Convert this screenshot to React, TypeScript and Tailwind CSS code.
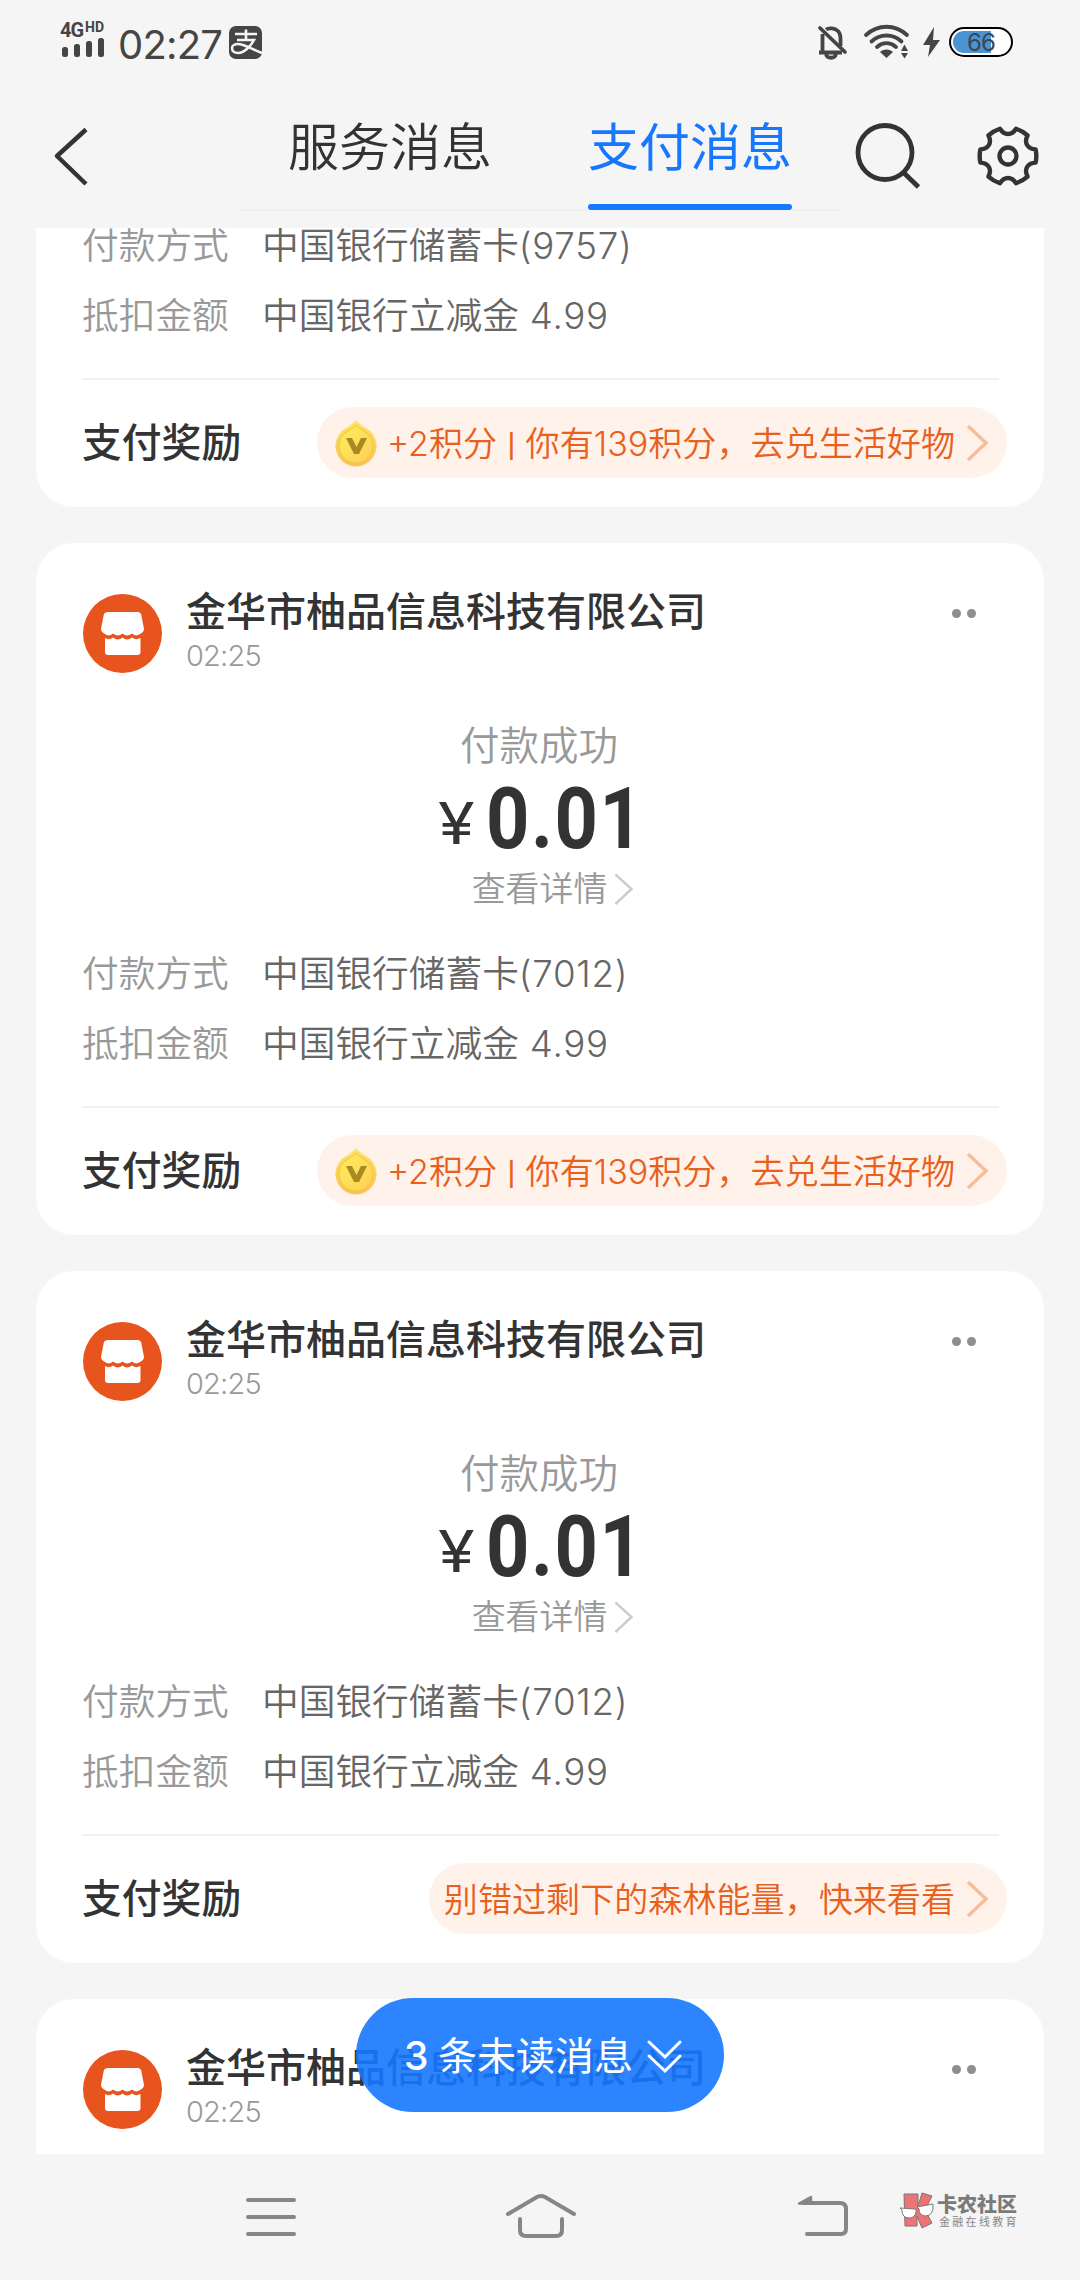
import type { ReactNode } from "react";

const FONT =
  "font-['Inter','Noto_Sans_CJK_SC',sans-serif]";

function gearPath(c: number, outer: number, inner: number) {
  const pt = (deg: number, r: number) => {
    const a = (deg * Math.PI) / 180;
    return `${(c + r * Math.cos(a)).toFixed(2)} ${(c + r * Math.sin(a)).toFixed(2)}`;
  };
  let d = `M${pt(-13.5, outer)}`;
  for (let i = 0; i < 6; i++) {
    const t = i * 60;
    d += `Q${pt(t, outer + 0.6)} ${pt(t + 13.5, outer)}`;
    d += `C${pt(t + 20, inner)} ${pt(t + 40, inner)} ${pt(t + 46.5, outer)}`;
  }
  return d + "Z";
}

const GEAR = gearPath(32, 28.4, 20.6);

function StatusBar() {
  return (
    <div className="flex h-[84px] items-start pl-[60px] text-[#454545]">
      <div className="mt-[20px] h-[40px] w-[48px]">
        <div className="flex h-[17px] items-start font-['Roboto',sans-serif] font-bold">
          <span className="w-[25px] text-[20px] leading-[20px] tracking-[-1px]">4G</span>
          <span className="text-[14px] leading-[15px]">HD</span>
        </div>
        <svg width="46" height="22" viewBox="0 0 46 22" fill="currentColor">
          <rect x="2" y="10" width="6" height="10" rx="2.5" />
          <rect x="14" y="7" width="6" height="13" rx="2.5" />
          <rect x="26" y="4" width="6" height="16" rx="2.5" />
          <rect x="38" y="1" width="6" height="19" rx="2.5" />
        </svg>
      </div>
      <span className="mt-[21px] ml-[10px] w-[111px] text-[40px] leading-[48px] tracking-[-0.8px] whitespace-nowrap">02:27</span>
      <svg className="mt-[26px]" width="34" height="34" viewBox="0 0 34 34" fill="none">
        <rect width="33" height="33" rx="7" fill="#454545" />
        <g stroke="#f5f5f5" strokeWidth="2.6">
          <path d="M6 8H28M17 3.500V14M8 14H25C22 20 15 27 9 27C5 27 3 25 3 22C3 19.500 6 18 9 18C15 18 20 22 33 27" />
        </g>
      </svg>
      <div className="mt-[24px] ml-[553px] flex items-start">
        <svg width="32" height="36" viewBox="0 0 32 36" fill="none" stroke="currentColor" strokeWidth="3.8">
          <path d="M6.500 10V28M3 28.500H26M10 5.500C13 3.500 19 4 22 7C24 9 24.500 12 24.500 15V22" />
          <path d="M10 30C11 35 19 35 20 30" />
          <path d="M4 4L29 28" strokeLinecap="round" />
        </svg>
        <svg className="ml-[15px]" width="48" height="36" viewBox="0 0 48 36" fill="none" stroke="currentColor" strokeWidth="3.800" strokeLinecap="round">
          <path d="M3 11C15 0 32 0 44 11M8.500 17.500C17 9.500 30 9.500 38.500 17.500M14 23C20 18 27 18 33 23" />
          <path d="M17 28C20 24.500 27 24.500 30 28L23.500 34Z" fill="currentColor" stroke="none" />
          <path d="M38 27L41.500 20.500L45 27ZM38 29H45L41.500 34.500Z" fill="currentColor" stroke="none" />
        </svg>
        <svg className="ml-[12px]" width="18" height="36" viewBox="0 0 18 36" fill="currentColor">
          <path d="M11 3L0 21H7L5 33L17 16H10Z" />
        </svg>
        <svg className="ml-[8px]" width="65" height="36" viewBox="0 0 65 36">
          <rect x="1" y="4" width="62" height="28" rx="14" fill="#fff" stroke="#000" strokeWidth="2" />
          <path d="M15 7H42V29H15A11 11 0 0 1 15 7Z" fill="#4b93d3" />
          <text x="32" y="27" textAnchor="middle" fontSize="24" letterSpacing="-1" fontFamily="Inter, sans-serif" fill="#3c4650">66</text>
        </svg>
      </div>
    </div>
  );
}

function Header() {
  return (
    <div className="flex h-[144px] items-start text-[#333]">
      <svg className="mt-[42px] ml-[52px]" width="38" height="60" viewBox="0 0 38 60" fill="none" stroke="#333" strokeWidth="4.500">
        <path d="M34 3.500L5 30L34 58" strokeLinejoin="round" />
      </svg>
      <div className="ml-[150px] flex h-[127px] w-[600px] border-b-2 border-[#f1f1f1]">
        <div className="h-[126px] w-[300px] pt-[26px] pl-[48px] text-[51px] leading-[76px] font-[350]">服务消息</div>
        <div className="ml-[48px] flex h-[126px] w-[204px] flex-col justify-between pt-[26px] text-[51px] leading-[76px] text-[#1677ff] whitespace-nowrap">
          支付消息
          <div className="h-[6px] shrink-0 rounded-full bg-[#1677ff]" />
        </div>
      </div>
      <svg className="mt-[36px] ml-[13px]" width="70" height="70" viewBox="0 0 70 70" fill="none" stroke="#333" strokeWidth="4.800">
        <circle cx="32" cy="32.500" r="27" />
        <path d="M51 53L65.500 67" />
      </svg>
      <svg className="mt-[40px] ml-[53px]" width="64" height="64" viewBox="0 0 64 64" fill="none" stroke="#333" strokeWidth="4.400" strokeLinejoin="round">
        <path d={GEAR} />
        <circle cx="32" cy="32" r="8.500" />
      </svg>
    </div>
  );
}

function Coin() {
  return (
    <svg className="mr-[10px]" width="42" height="48" viewBox="0 0 42 48">
      <defs>
        <linearGradient id="coin" x1="0" y1="0" x2="0" y2="1">
          <stop offset="0" stopColor="#fbe566" />
          <stop offset="1" stopColor="#fbc250" />
        </linearGradient>
        <linearGradient id="coinFace" x1="0" y1="0" x2="1" y2="1">
          <stop offset="0" stopColor="#fdee58" />
          <stop offset="1" stopColor="#fdcf5a" />
        </linearGradient>
      </defs>
      <path d="M21 1Q24 5 31 9A20.500 20.500 0 1 1 11 9Q18 5 21 1Z" fill="url(#coin)" />
      <path d="M21 6Q24 9 29 12A17 17 0 1 1 13 12Q18 9 21 6Z" fill="url(#coinFace)" stroke="#f2c244" strokeWidth="1" />
      <path d="M11 19H17L21.500 28L26 19H32L24 35H19Z" fill="#a98a22" />
    </svg>
  );
}

function Reward({ coin, children }: { coin?: boolean; children: ReactNode }) {
  return (
    <div className={`flex h-[71px] items-center rounded-full bg-[#fff2ea] pr-[18px] text-[34.100px] font-[350] text-[#e8601c] whitespace-nowrap ${coin ? "pl-[18px]" : "pl-[15px]"}`}>
      {coin && <Coin />}
      <span className="mt-[2px] leading-[50px]">{children}</span>
      <svg className="ml-[11px]" width="23" height="38" viewBox="0 0 23 38" fill="none" stroke="#f6bd98" strokeWidth="3.400">
        <path d="M2 2L20 19L2 36" />
      </svg>
    </div>
  );
}

function Row({ label, name, detail }: { label: string; name: string; detail: string }) {
  return (
    <div className="flex h-[70px] items-center pt-[2px] text-[36.700px] font-[350]">
      <span className="w-[180px] text-[#999]">{label}</span>
      <span className="text-[#666] whitespace-pre">
        {name}
        <span className="tracking-[0.700px]">{detail}</span>
      </span>
    </div>
  );
}

function Details({ card, coin, reward }: { card: string; coin?: boolean; reward: ReactNode }) {
  return (
    <div className="shrink-0 pl-[46px]">
      <Row label="付款方式" name="中国银行储蓄卡" detail={`(${card})`} />
      <Row label="抵扣金额" name="中国银行立减金" detail=" 4.99" />
      <div className="mt-[28px] mr-[45px] h-[2px] bg-[#f1f1f1]" />
      <div className="mb-[2px] flex h-[125px] items-center justify-between pr-[37px]">
        <span className="pt-[1px] text-[39.800px] font-medium text-[#333]">支付奖励</span>
        <Reward coin={coin}>{reward}</Reward>
      </div>
    </div>
  );
}

function ShopHeader() {
  return (
    <div className="flex h-[178px] items-start pt-[42px] pl-[47px]">
      <svg className="mt-[9px]" width="79" height="79" viewBox="0 0 79 79">
        <circle cx="39.500" cy="39.500" r="39.500" fill="#e8541e" />
        <path d="M25 18H55Q57.500 18 58.200 20.500L61 35Q61 38 57 40Q53 43 49 39.500Q44 43.500 39.500 39.500Q35 43.500 30 39.500Q26 43 22 40Q18 38 18 35L20.800 20.500Q21.500 18 25 18Z" fill="#fff" />
        <path d="M22 44Q26 46.500 30 43.500Q35 47.500 39.500 43.500Q44 47.500 49 43.500Q53 46.500 57.500 44V58Q57.500 61 54.500 61H25Q22 61 22 58Z" fill="#fff" />
      </svg>
      <div className="ml-[24px] flex-1 pt-[2px] whitespace-nowrap">
        <div className="text-[40px] leading-[50px] font-medium text-[#333]">金华市柚品信息科技有限公司</div>
        <div className="text-[29px] leading-[37px] font-[350] tracking-[-0.8px] text-[#999]">02:25</div>
      </div>
      <div className="mt-[24px] mr-[68px] flex gap-[6px]">
        <i className="size-[9px] rounded-full bg-[#8e8e8e]" />
        <i className="size-[9px] rounded-full bg-[#8e8e8e]" />
      </div>
    </div>
  );
}

function MessageCard({ coin, reward }: { coin?: boolean; reward: ReactNode }) {
  return (
    <section className="h-[692px] shrink-0 rounded-[38px] bg-white">
      <ShopHeader />
      <div className="h-[50px] pr-[2px] text-center text-[39.500px] leading-[51px] font-[350] text-[#999]">付款成功</div>
      <div className="flex h-[92px] justify-center pr-[10px] text-[#333]">
        <span className="mt-[17px] w-[48px] origin-left scale-x-[1.150] text-[58px] leading-[70px]">¥</span>
        <span className="mt-[2px] w-[146px] origin-left scale-x-[0.880] font-['Roboto',sans-serif] text-[86px] leading-[92px] font-bold tracking-[1.800px]">0.01</span>
      </div>
      <div className="mb-[25px] flex h-[50px] items-center justify-center pt-[2px] pl-[26px] text-[33.900px] font-[350] text-[#999]">
        查看详情
        <svg className="ml-[7px]" width="20" height="32" viewBox="0 0 20 32" fill="none" stroke="#ccc" strokeWidth="2.400">
          <path d="M1.500 1.500L17.500 16L1.500 31" />
        </svg>
      </div>
      <Details card="7012" coin={coin} reward={reward} />
    </section>
  );
}

const POINTS = (
  <>
    +2积分 <span className="px-[0.500px] font-['Roboto',sans-serif] font-normal">|</span> 你有139积分，去兑生活好物
  </>
);

function NavBar() {
  return (
    <div className="flex h-[126px] items-start pl-[244px]">
      <svg className="mt-[40px]" width="54" height="46" viewBox="0 0 54 46" stroke="#868686" strokeWidth="4" strokeLinecap="round">
        <path d="M4 6H50M4 23H50M4 40H50" />
      </svg>
      <svg className="mt-[38px] ml-[206px]" width="76" height="50" viewBox="0 0 76 50" fill="none" stroke="#868686" strokeWidth="4" strokeLinecap="round">
        <path d="M4 22L33 5Q37 3 41 5L70 22M16 27V38Q16 44 22 44H52Q58 44 58 38V27" />
      </svg>
      <svg className="mt-[38px] ml-[215px]" width="56" height="50" viewBox="0 0 56 50" fill="none" stroke="#868686" strokeWidth="4" strokeLinecap="round">
        <path d="M12 42H46Q51 42 51 37V17Q51 11 45 11H8" />
        <path d="M4 11.500L16 5V11.500Z" fill="#868686" strokeWidth="2.500" strokeLinejoin="round" />
      </svg>
      <div className="mt-[38px] ml-[48px] flex">
        <svg width="36" height="37" viewBox="0 0 36 37" stroke="#777" strokeWidth="1">
          <path d="M5 2H19V14L23 1L33 4L26 18L33 31L23 36L18 24V34H6Z" fill="#ee7377" />
          <path d="M1 16L16 17Q18 17 17 20Q16 26 10 26Q3 26 3 18ZM18 15L34 12Q35 24 26 24Q20 23 20 17Z" fill="#fff" />
        </svg>
        <div className="ml-[2px] font-['Noto_Sans_CJK_SC',sans-serif] text-[#7a7a7a] whitespace-nowrap">
          <div className="text-[20px] leading-[23px] font-black">卡农社区</div>
          <div className="pl-[2px] text-[11px] leading-[13px] tracking-[2.300px] text-[#888]">金融在线教育</div>
        </div>
      </div>
    </div>
  );
}

export default function App() {
  return (
    <div className={`flex h-[2280px] w-[1080px] flex-col overflow-hidden bg-[#f5f5f5] ${FONT}`}>
      <StatusBar />
      <Header />
      <main className="relative flex h-[1926px] flex-col gap-[36px] overflow-hidden px-[36px]">
        <section className="flex h-[279px] shrink-0 flex-col justify-end overflow-hidden rounded-b-[38px] bg-white">
          <Details card="9757" coin reward={POINTS} />
        </section>
        <MessageCard coin reward={POINTS} />
        <MessageCard reward="别错过剩下的森林能量，快来看看" />
        <section className="h-[692px] shrink-0 rounded-t-[38px] bg-white">
          <ShopHeader />
        </section>
        <div className="absolute bottom-[42px] left-[356px] flex h-[114px] w-[368px] items-center rounded-full bg-[#1677ff]/90 pt-[2px] pl-[48px] text-[39px] whitespace-nowrap text-white">
          <span className="w-[34px] font-medium">3</span>
          <span>条未读消息</span>
          <svg className="ml-[11px]" width="40" height="38" viewBox="0 0 40 38" fill="none" stroke="#fff" strokeWidth="3" strokeLinecap="round">
            <path d="M5 5L21 20L36 5M5 19L21 34L36 19" />
          </svg>
        </div>
      </main>
      <NavBar />
    </div>
  );
}
